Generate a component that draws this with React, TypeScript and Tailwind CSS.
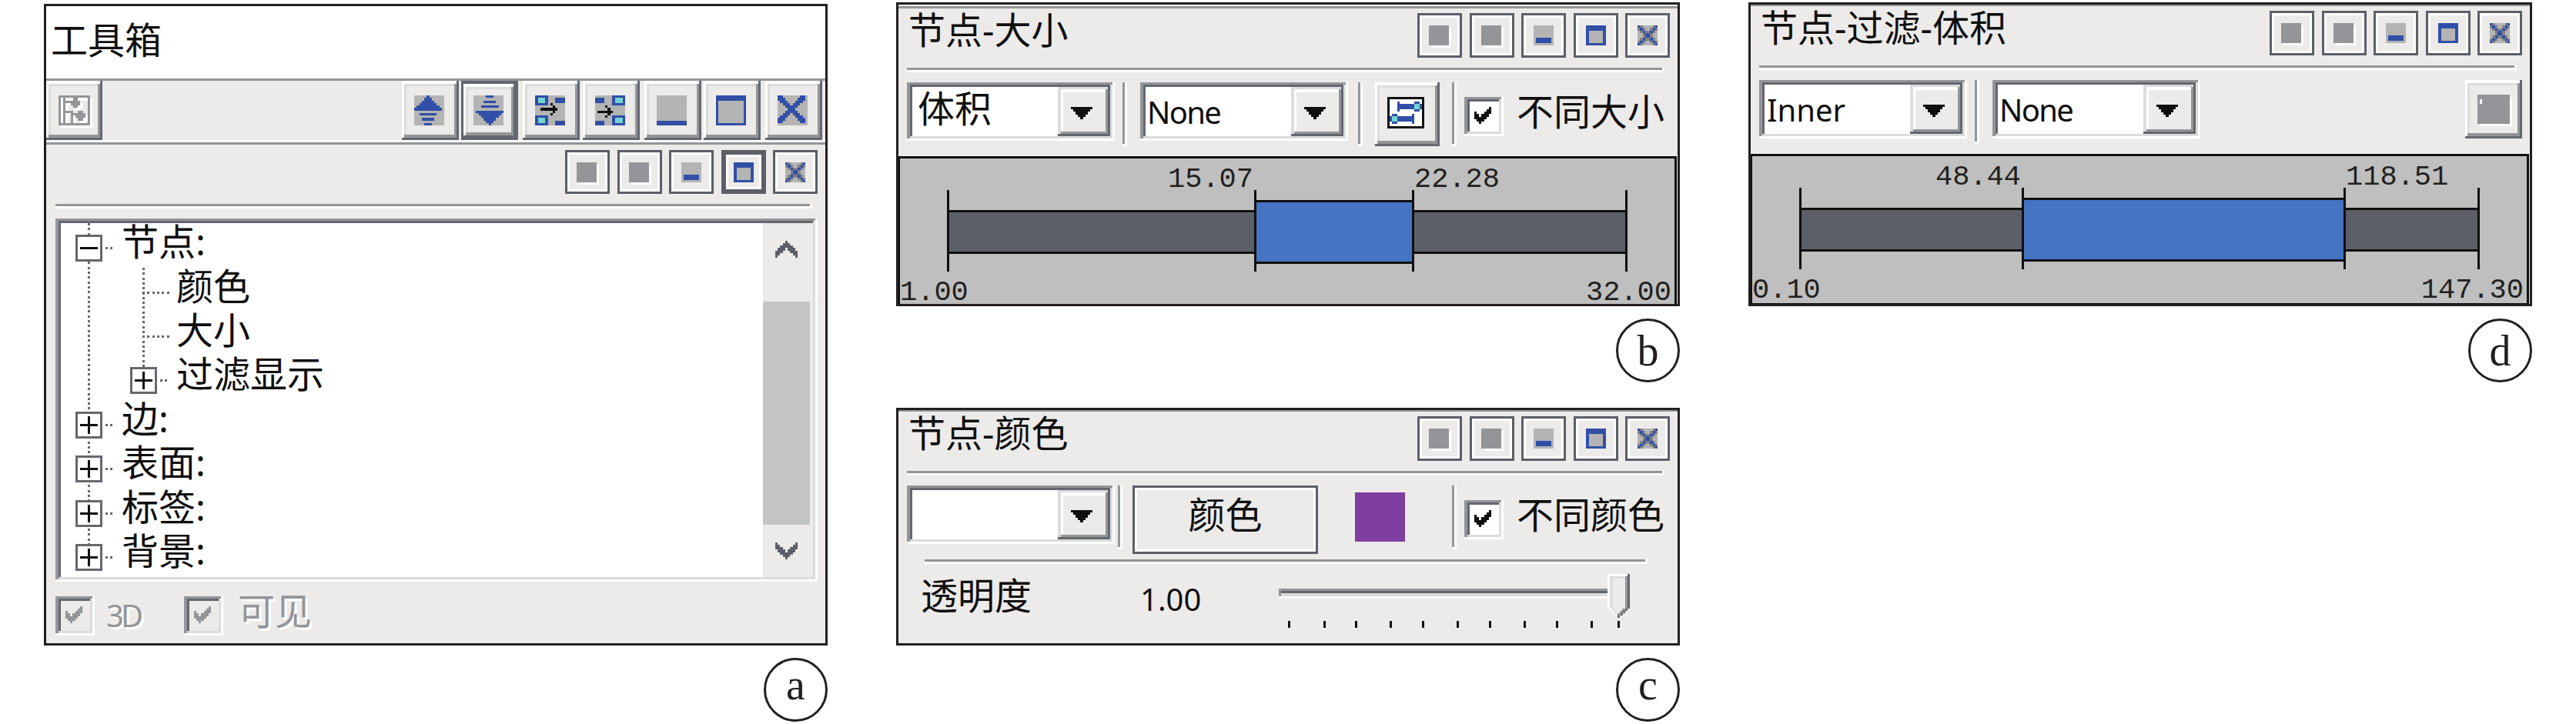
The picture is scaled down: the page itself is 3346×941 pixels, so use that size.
import type { ReactNode } from "react";
import clsx from "clsx";

const RAISED =
  "bg-[#ecebea] shadow-[inset_-3px_-3px_#636870,inset_3px_4px_#fff,inset_-6px_-7px_#939598,inset_6px_7px_#dcdcdc]";
const SUNKEN =
  "shadow-[inset_-3px_-3px_#fff,inset_4px_3px_#939598,inset_-6px_-6px_#dcdcdc,inset_7px_6px_#636870]";

const BLUE = "#314fa6";
const CYAN = "#74d3d3";
const GRAY = "#b4b4b4";
const INK = "#100f0f";

type Rect = [x: number, y: number, w: number, h: number, fill?: string];

function Pixels({ cols, rows, rects, className }: { cols: number; rows: number; rects: Rect[]; className: string }) {
  return (
    <svg
      viewBox={`0 0 ${cols} ${rows}`}
      preserveAspectRatio="none"
      shapeRendering="crispEdges"
      className={clsx("block shrink-0 overflow-visible", className)}
    >
      {rects.map(([x, y, width, height, fill], i) => (
        <rect key={i} x={x} y={y} width={width} height={height} fill={fill ?? "currentColor"} />
      ))}
    </svg>
  );
}

const TOOL_ICONS: Record<string, Rect[]> = {
  up: [
    [5, 0, 1, 1, BLUE], [4, 1, 3, 1, BLUE], [3, 2, 5, 1, BLUE], [2, 3, 7, 1, BLUE], [1, 4, 9, 1, BLUE],
    [0, 5, 11, 1, BLUE], [2, 7, 7, 1, BLUE], [3, 9, 5, 1, BLUE], [4, 11, 3, 1, BLUE],
  ],
  down: [
    [5, 0, 3, 1, BLUE], [4, 2, 5, 1, BLUE], [3, 4, 7, 1, BLUE], [1, 6, 11, 1, BLUE], [2, 7, 9, 1, BLUE],
    [3, 8, 7, 1, BLUE], [4, 9, 5, 1, BLUE], [5, 10, 3, 1, BLUE], [6, 11, 1, 1, BLUE],
  ],
  fromLeft: [
    [0, 0, 5.2, 4, BLUE], [1.2, 1, 2.8, 2, CYAN], [8, 1, 4, 2, BLUE],
    [0, 8, 5.2, 4, BLUE], [1.2, 9, 2.8, 2, CYAN], [8, 10, 4, 2, BLUE],
    [2, 5, 7, 1, INK], [6, 3, 1, 1, INK], [7, 4, 1, 3, INK], [6, 7, 1, 1, INK],
  ],
  fromRight: [
    [6.9, 0, 5.1, 4, BLUE], [7.9, 1, 3.1, 2, CYAN], [0, 1, 3.7, 2, BLUE],
    [6.9, 8, 5.1, 4, BLUE], [7.9, 9, 3.1, 2, CYAN], [0, 10, 3.7, 2, BLUE],
    [1, 6, 6, 1, INK], [4, 4, 1, 1, INK], [5, 5, 1, 3, INK], [4, 8, 1, 1, INK],
  ],
  min: [[0, 10, 12, 2, BLUE]],
  max: [[0, 0, 12, 2, BLUE], [0, 0, 1, 12, BLUE], [11, 0, 1, 12, BLUE], [0, 11, 12, 1, BLUE]],
  close: Array.from({ length: 10 }, (_, i): Rect[] => [[i, i, 2, 2, BLUE], [9 - i, i, 2, 2, BLUE]]).flat(),
};

const TREE_ICON: Rect[] = [
  [0, 0, 13, 1], [0, 0, 1, 12], [12, 0, 1, 12], [0, 11, 13, 1], [2, 0, 1, 12], [3, 2, 6, 1], [6, 1, 2, 1],
  [5, 3, 4, 1], [6, 4, 2, 1], [3, 6, 3, 1], [5, 6, 1, 6], [6, 7, 5, 1], [8, 6, 2, 1], [7, 8, 4, 1], [8, 9, 2, 1],
];

const CLOSE_SMALL: Rect[] = [
  ...Array.from({ length: 7 }, (_, i): Rect[] => [
    [i + 1, i, 1, 1, "#808285"], [i, i + 1, 1, 1, "#808285"],
    [6 - i, i, 1, 1, "#808285"], [7 - i, i + 1, 1, 1, "#808285"],
  ]).flat(),
  ...Array.from({ length: 8 }, (_, i): Rect[] => [[i, i, 1, 1, BLUE], [7 - i, i, 1, 1, BLUE]]).flat(),
];

const LINK_ICON: Rect[] = [
  [4, 2, 1, 4, BLUE], [5, 3, 6, 2, BLUE], [11, 2, 2, 4, BLUE], [13, 3, 1, 2, BLUE], [11, 3, 2, 2, CYAN],
  [2, 7, 2, 4, BLUE], [1, 8, 1, 2, BLUE], [4, 8, 6, 2, BLUE], [10, 7, 1, 4, BLUE], [2, 8, 2, 2, CYAN],
];

const CHECK: Rect[] = [4, 5, 6, 5, 4, 3, 2].map((end, i) => [i, end - 2, 1, 3]);
const CHEVRON_UP: Rect[] = Array.from({ length: 9 }, (_, i) => [i, Math.abs(4 - i), 1, 3]);
const CHEVRON_DOWN: Rect[] = Array.from({ length: 9 }, (_, i) => [i, 4 - Math.abs(4 - i), 1, 3]);
const TRIANGLE: Rect[] = [0, 1, 2, 3, 4].map((i) => [i, i, 9 - 2 * i, 1]);

const TOOLS = [
  { icon: "up", className: "" },
  { icon: "down", className: "ml-[3px]" },
  { icon: "fromLeft", className: "ml-[6px]" },
  { icon: "fromRight", className: "ml-[4px]" },
  { icon: "min", className: "ml-[6px]" },
  { icon: "max", className: "ml-[3px]" },
  { icon: "close", className: "ml-[6px]" },
];

function ToolButton({ icon, className }: { icon: string; className: string }) {
  const pressed = icon === "down";
  return (
    <div className={clsx("h-[77px] w-[74px]", pressed && "bg-[#636870] pt-1 pr-[3px] pb-[3px] pl-[3px]", className)}>
      <div className={clsx("size-full", RAISED, pressed ? "pt-[15px] pl-[13px]" : "pt-[19px] pl-4")}>
        <Pixels cols={12} rows={12} rects={[[0, 0, 12, 12, GRAY], ...TOOL_ICONS[icon]]} className="h-[39px] w-[39px]" />
      </div>
    </div>
  );
}

function SmallButtons({ active, tall }: { active?: boolean; tall?: boolean }) {
  const frame = clsx(
    "flex w-[58px] items-center justify-center border-[3px] border-[#5c5f68] bg-[#ecebea]",
    tall ? "h-[58px]" : "h-[57px]",
  );
  const plain = "shadow-[inset_0_0_0_3px_#fff]";
  return (
    <div className="flex gap-[9.5px]">
      {[0, 1].map((i) => (
        <div key={i} className={clsx(frame, plain)}>
          <div className="size-[26px] -translate-x-px bg-[#939598] shadow-[3px_3px_#fff]" />
        </div>
      ))}
      <div className={clsx(frame, plain)}>
        <Pixels cols={8} rows={8} rects={[[0, 0, 8, 8, GRAY], [1, 5, 6, 2, BLUE]]} className="size-[26px]" />
      </div>
      <div className={clsx(frame, active ? "shadow-[inset_0_0_0_3px_#5c5f68,inset_0_0_0_6px_#fff]" : plain)}>
        <Pixels
          cols={8}
          rows={8}
          rects={[[0, 0, 8, 8, BLUE], [1.2, 2, 5.7, 5, GRAY]]}
          className="size-[26px]"
        />
      </div>
      <div className={clsx(frame, plain)}>
        <Pixels cols={8} rows={8} rects={[[0, 0, 8, 8, GRAY], ...CLOSE_SMALL]} className="size-[26px]" />
      </div>
    </div>
  );
}

function Rule({ className }: { className: string }) {
  return <div className={clsx("h-[6px] bg-[#939598] shadow-[inset_-3px_-3px_#fff]", className)} />;
}

function Divider({ className }: { className?: string }) {
  return <div className={clsx("h-[83px] w-[6px] shrink-0 bg-[#939598] shadow-[inset_-3px_-3px_#fff]", className)} />;
}

function Combo({ children, className }: { children?: ReactNode; className?: string }) {
  return (
    <div className={clsx("flex h-[76px] w-[270px] shrink-0 bg-white pt-[6px] pr-[6px] pb-[6px] pl-[7px]", SUNKEN, className)}>
      <div className="flex-1">{children}</div>
      <div className="h-16 w-[68px] bg-[#ecebea] pt-[26px] pl-[17px] shadow-[inset_-3px_-3px_#636870,inset_4px_3px_#dcdcdc,inset_-6px_-6px_#939598,inset_7px_7px_#fff]">
        <Pixels cols={9} rows={5} rects={TRIANGLE} className="h-4 w-7 text-[#100f0f]" />
      </div>
    </div>
  );
}

function Latin({ children, className }: { children: string; className?: string }) {
  return <div className={clsx("text-[40px] leading-[45px] whitespace-nowrap", className)}>{children}</div>;
}

function Check({ disabled, className }: { disabled?: boolean; className?: string }) {
  return (
    <div
      className={clsx(
        "h-[51px] w-[51px] shrink-0 pt-[13px] pl-[13px]",
        SUNKEN,
        disabled ? "bg-[#ecebea] text-[#939598]" : "bg-white text-[#100f0f]",
        className,
      )}
    >
      <Pixels cols={7} rows={7} rects={CHECK} className="size-[22px]" />
    </div>
  );
}

function Badge({ children }: { children: string }) {
  const low = children === "a" || children === "c";
  return (
    <div className="mt-4 flex justify-end">
      <div
        className={clsx(
          "flex size-[83px] items-center justify-center rounded-full border-[3px] border-[#231f20] font-['Liberation_Serif',serif] text-[56px] leading-none text-[#231f20]",
          low && "pb-[13px]",
        )}
      >
        {children}
      </div>
    </div>
  );
}

const DOTS_X = "bg-[repeating-linear-gradient(90deg,#66686e_0_3px,transparent_3px_6.3px)]";
const DOTS_Y = "bg-[repeating-linear-gradient(180deg,#66686e_0_3px,transparent_3px_6.3px)]";

const NODES = [
  { label: "节点:", level: 1, state: "open" },
  { label: "颜色", level: 2, state: "leaf" },
  { label: "大小", level: 2, state: "leaf" },
  { label: "过滤显示", level: 2, state: "closed" },
  { label: "边:", level: 1, state: "closed" },
  { label: "表面:", level: 1, state: "closed" },
  { label: "标签:", level: 1, state: "closed" },
  { label: "背景:", level: 1, state: "closed" },
];

function TreeRow({ label, level, state }: { label: string; level: number; state: string }) {
  const leaf = state === "leaf";
  return (
    <div className={clsx("flex h-[57.4px] items-center", leaf ? "pl-[106px]" : level === 2 ? "pl-[90px]" : "pl-[19px]")}>
      {leaf ? (
        <div className={clsx("mr-[9px] h-[3px] w-[35px]", DOTS_X)} />
      ) : (
        <>
          <div className="relative flex size-[35px] items-center justify-center border-[3px] border-[#66686e] bg-white">
            <div className="h-[3px] w-[23px] bg-[#100f0f]" />
            {state === "closed" && <div className="absolute h-[23px] w-[3px] bg-[#100f0f]" />}
          </div>
          <div className={clsx("mr-3 ml-1 h-[3px] w-[9px]", DOTS_X)} />
        </>
      )}
      <div className="-mt-[18px] leading-[45px] whitespace-nowrap">{label}</div>
    </div>
  );
}

function Toolbox() {
  return (
    <div className="h-[834px] w-[1018px] border-[3px] border-[#231f20] bg-[#ecebea]">
      <div className="h-[94px] bg-white pt-[21px] pl-[6px] leading-[45px]">工具箱</div>
      <div className="flex h-[86px] border-t-[3px] border-b-[3px] border-[#939598] shadow-[inset_0_-3px_#fff]">
        <div className={clsx("h-[77px] w-[73px] pt-[19px] pl-4", RAISED)}>
          <Pixels
            cols={13}
            rows={12}
            rects={[...TREE_ICON.map(([x, y, w, h]): Rect => [x + 1, y + 1, w, h, "#fff"]), ...TREE_ICON]}
            className="h-[39px] w-[41px] text-[#939598]"
          />
        </div>
        <div className="ml-auto flex pr-1">
          {TOOLS.map((t) => (
            <ToolButton key={t.icon} {...t} />
          ))}
        </div>
      </div>
      <div className="mt-[7px] flex justify-end pr-[10px]">
        <SmallButtons active />
      </div>
      <Rule className="mt-[13px] ml-3 w-[983px]" />
      <div className={clsx("mt-[13px] ml-3 flex h-[472px] w-[990px] bg-white p-[6px] pl-[7px]", SUNKEN)}>
        <div className="relative flex-1 pt-1">
          <div className={clsx("absolute top-0 left-[35px] h-[435px] w-[3px]", DOTS_Y)} />
          <div className={clsx("absolute top-[58px] left-[106px] h-[130px] w-[3px]", DOTS_Y)} />
          {NODES.map((n) => (
            <TreeRow key={n.label} {...n} />
          ))}
        </div>
        <div className="flex w-[65px] flex-col bg-[#ecebea] pr-1 text-[#5c5f68]">
          <Pixels cols={9} rows={7} rects={CHEVRON_UP} className="mt-[23px] ml-4 h-[22px] w-[29px]" />
          <div className="mt-[57px] h-[290px] bg-[#c2c4c6]" />
          <Pixels cols={9} rows={7} rects={CHEVRON_DOWN} className="mt-[23px] ml-4 h-[22px] w-[29px]" />
        </div>
      </div>
      <div className="mt-[19px] flex pl-3 leading-[45px] whitespace-nowrap text-[#939598] [text-shadow:3px_3px_#fff]">
        <Check disabled />
        <Latin className="mt-[2px] ml-[15px] w-[53px] tracking-[-4px]">3D</Latin>
        <Check disabled className="ml-12" />
        <div className="-mt-[4px] ml-[19px]">可见</div>
      </div>
    </div>
  );
}

function Panel({ title, lit, className, children }: { title: string; lit?: boolean; className: string; children: ReactNode }) {
  return (
    <div className={clsx("flex w-[1018px] flex-col border-[3px] border-[#231f20] bg-[#ecebea]", className)}>
      {lit && <div className="h-[2px] shrink-0 bg-white" />}
      <div className={clsx("shrink-0 bg-[#939598]", lit ? "h-[3px]" : "h-[2px]")} />
      <div className="mt-[6px] flex justify-between pr-[10px] pl-[13px]">
        <div className="leading-[43px] whitespace-nowrap">{title}</div>
        <SmallButtons tall />
      </div>
      <Rule className="mt-[13px] ml-[11px] w-[984px] shrink-0" />
      {children}
    </div>
  );
}

type RangeProps = { low: string; high: string; min: string; max: string; spans: [number, number, number]; className?: string };

function Range({ low, high, min, max, spans, className }: RangeProps) {
  const tick = <div className="h-[106px] w-[3px] shrink-0 bg-[#100f0f]" />;
  const track = "h-[57px] shrink-0 border-y-[3px] border-[#100f0f] bg-[#5c5f68] mt-[26px]";
  return (
    <div
      className={clsx(
        "mr-px flex-1 border-t-[3px] border-r-[3px] border-l-2 border-[#100f0f] bg-[#bfbfbf] font-['Liberation_Mono',monospace] text-[37px] leading-[26px] text-[#231f20]",
        className,
      )}
    >
      <div className="flex pt-[14px] pb-px">
        <div className="text-right" style={{ width: 63 + spans[0] }}>{low}</div>
        <div className="shrink-0" style={{ width: spans[1] + 7 }} />
        <div>{high}</div>
      </div>
      <div className="flex items-start pl-[61px]">
        {tick}
        <div className={track} style={{ width: spans[0] }} />
        {tick}
        <div className="mt-[13px] h-[83px] shrink-0 border-y-[3px] border-[#100f0f] bg-[#4574c2]" style={{ width: spans[1] }} />
        {tick}
        <div className={track} style={{ width: spans[2] }} />
        {tick}
      </div>
      <div className="flex justify-between pt-[14px] pr-1">
        <div>{min}</div>
        <div>{max}</div>
      </div>
    </div>
  );
}

function SizePanel() {
  return (
    <Panel title="节点-大小" lit className="h-[395px]">
      <div className="mt-[13px] flex h-24 pl-[11px]">
        <Combo>
          <div className="pt-[5px] pl-[7px] leading-[45px]">体积</div>
        </Combo>
        <Divider className="ml-[10px]" />
        <Combo className="ml-[17px]">
          <Latin className="pt-[10px] pl-[2px] tracking-[-1.7px]">None</Latin>
        </Combo>
        <Divider className="ml-[13px]" />
        <div className={clsx("ml-4 h-[83px] w-[84px] shrink-0 pt-[19px] pl-4", RAISED)}>
          <Pixels
            cols={15}
            rows={13}
            rects={[[0, 0, 15, 13, INK], [1, 1, 13, 11, "#fff"], ...LINK_ICON]}
            className="h-[41px] w-[48px]"
          />
        </div>
        <Divider className="ml-4" />
        <Check className="mt-[19px] ml-[10px]" />
        <div className="mt-[15px] ml-[17px] leading-[45px] whitespace-nowrap">不同大小</div>
      </div>
      <Range low="15.07" high="22.28" min="1.00" max="32.00" spans={[396, 202, 274]} />
    </Panel>
  );
}

function FilterPanel() {
  return (
    <Panel title="节点-过滤-体积" className="h-[395px]">
      <div className="mt-[13px] flex h-24 pr-[10px] pl-[11px]">
        <Combo>
          <Latin className="pt-[10px] pl-[3px]">Inner</Latin>
        </Combo>
        <Divider className="ml-[10px]" />
        <Combo className="ml-[17px]">
          <Latin className="pt-[10px] pl-[2px] tracking-[-1.7px]">None</Latin>
        </Combo>
        <div className={clsx("ml-auto h-[76px] w-[74px] pt-[19px] pl-4", RAISED)}>
          <div className="h-[38px] w-[42px] bg-[#939598] pt-[6px] pl-[3px] shadow-[3px_3px_#fff]">
            <div className="h-[6px] w-[3px] bg-white" />
          </div>
        </div>
      </div>
      <Range low="48.44" high="118.51" min="0.10" max="147.30" spans={[286, 415, 171]} className="border-b" />
    </Panel>
  );
}

const SCALE = [0, 46, 87, 132, 174, 219, 261, 306, 348, 393, 428];

function Slider() {
  return (
    <div className="relative mt-[32px] h-[51px] w-[456px]">
      <div className="h-[13px] w-[440px] bg-[#dcdcdc] shadow-[inset_0_-3px_#fff,inset_3px_3px_#939598,inset_0_6px_#636870]" />
      <svg viewBox="0 0 29 57" shapeRendering="crispEdges" className="absolute -top-[19px] right-0 h-[57px] w-[29px]">
        <path d="M0 0H26V3H3V45H6V48H9V51H12V54H9V51H6V48H3V45H0Z" fill="#fff" />
        <path d="M3 3H23V45H20V48H17V51H14V54H12V51H9V48H6V45H3Z" fill="#dcdcdc" />
        <path d="M7 6H23V45H20V48H17V51H12V48H9V45H7Z" fill="#ecebea" />
        <path d="M23 3H26V45H23V48H20V51H17V54H13V51H16V48H19V45H23Z" fill="#939598" />
        <path d="M26 0H29V45H26V48H23V51H20V54H16V57H13V54H17V51H20V48H23V45H26Z" fill="#636870" />
      </svg>
      <svg viewBox="0 0 444 9" shapeRendering="crispEdges" className="mt-[29px] h-[9px] w-[444px]">
        {SCALE.map((x) => (
          <rect key={x} x={x + 12} width="3" height="9" fill={INK} />
        ))}
      </svg>
    </div>
  );
}

function ColorPanel() {
  return (
    <Panel title="节点-颜色" className="h-[309px]">
      <div className="mt-[13px] flex h-[89px] shrink-0 pl-[11px]">
        <Combo />
        <Divider className="ml-1" />
        <div className="ml-[13px] flex h-[89px] w-[241px] shrink-0 justify-center border-[3px] border-[#5c5f68] pt-3 leading-[45px] shadow-[inset_0_0_0_3px_#fff]">
          颜色
        </div>
        <div className="mt-[9px] ml-12 h-16 w-[65px] shrink-0 bg-[#7f3fa0]" />
        <Divider className="ml-[61px]" />
        <Check className="mt-[19px] ml-[10px]" />
        <div className="mt-[15px] ml-[17px] leading-[45px] whitespace-nowrap">不同颜色</div>
      </div>
      <Rule className="mt-[7px] ml-[34px] w-[939px] shrink-0" />
      <div className="flex pl-[29px] leading-[45px] whitespace-nowrap">
        <div className="mt-[18px]">透明度</div>
        <Latin className="mt-[23px] ml-[141px] w-[180px]">1.00</Latin>
        <Slider />
      </div>
    </Panel>
  );
}

export default function App() {
  return (
    <div className="flex h-[941px] w-[3346px] overflow-hidden bg-white pl-[57px] font-['Noto_Sans','Noto_Sans_CJK_SC',sans-serif] text-[48px] text-[#100f0f]">
      <div className="pt-[5px]">
        <Toolbox />
        <Badge>a</Badge>
      </div>
      <div className="ml-[89px] pt-[3px]">
        <SizePanel />
        <Badge>b</Badge>
        <div className="h-[33px]" />
        <ColorPanel />
        <Badge>c</Badge>
      </div>
      <div className="ml-[89px] pt-[3px]">
        <FilterPanel />
        <Badge>d</Badge>
      </div>
    </div>
  );
}
